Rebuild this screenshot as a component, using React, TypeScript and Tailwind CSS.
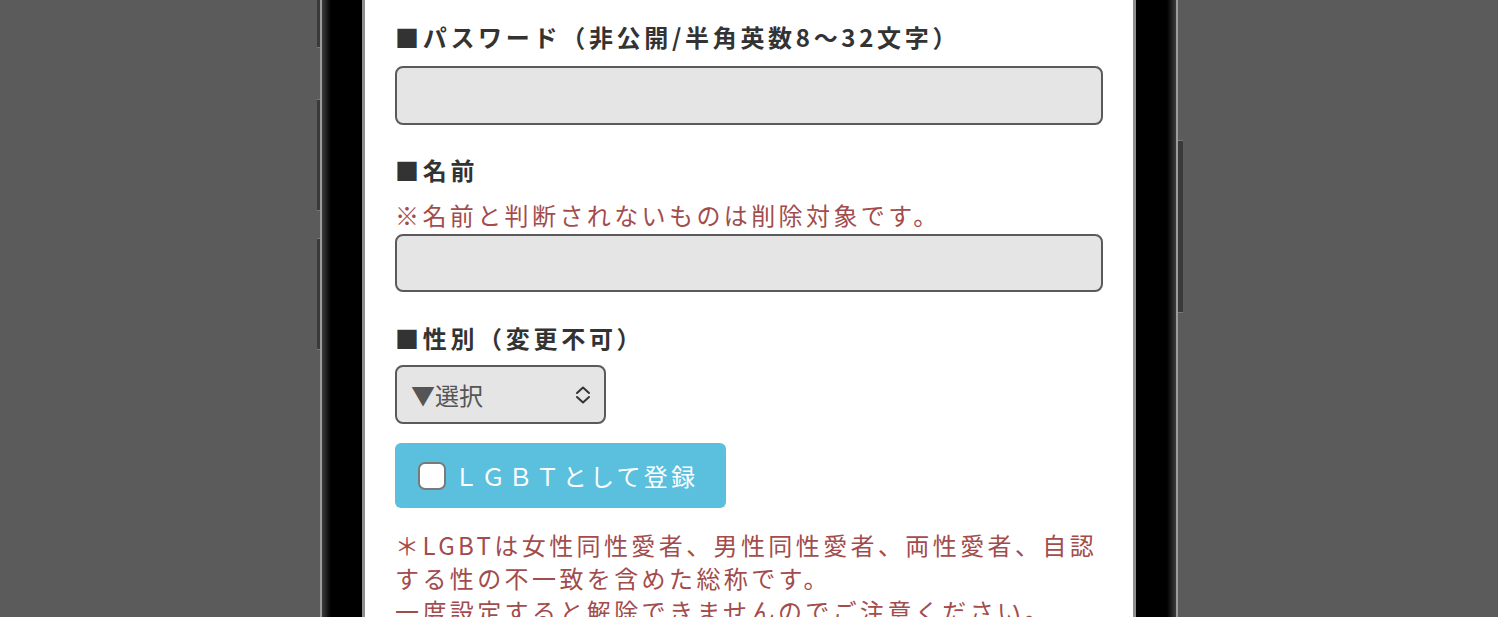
export default function App() {
  const font = { fontFamily: '"Noto Sans CJK JP", "Noto Sans", sans-serif' };

  return (
    <div className="w-full h-[617px] bg-[#5b5b5b] overflow-hidden flex justify-center" style={font}>
      <div className="relative w-[858px] h-[617px] shrink-0 border-x-2 border-[#9c9c9c] bg-[linear-gradient(to_right,#3c3c3c,#000_9px,#000_calc(100%-9px),#3c3c3c)] px-[40px]">
        {/* side buttons */}
        <div className="absolute left-[-5px] top-[-2px] w-[3px] h-[50px] bg-[#3a3a3a] border-b border-[#777]" />
        <div className="absolute left-[-5px] top-[99px] w-[3px] h-[112px] bg-[#3a3a3a] border-y border-[#777]" />
        <div className="absolute left-[-5px] top-[238px] w-[3px] h-[112px] bg-[#3a3a3a] border-y border-[#777]" />
        <div className="absolute right-[-7px] top-[140px] w-[5px] h-[173px] bg-[#3a3a3a] border-y border-[#777]" />

        <div className="h-full bg-white border-x-[3px] border-[#8e8e8e] px-[30px] pt-[19px]">
          <h2 className="text-[24px] leading-[36px] font-bold text-[#333] tracking-[3.7px] whitespace-nowrap">
            ■パスワード（非公開/半角英数8〜32文字）
          </h2>
          <input
            type="password"
            className="mt-[11px] block w-full h-[59px] rounded-[8px] border-2 border-[#5a5a5a] bg-[#e5e5e5] outline-none"
          />

          <h2 className="mt-[27px] text-[24px] leading-[36px] font-bold text-[#333] tracking-[3.7px]">■名前</h2>
          <p className="mt-[9px] text-[24px] leading-[36px] text-[#a24c4c] tracking-[3.4px] whitespace-nowrap">
            ※名前と判断されないものは削除対象です。
          </p>
          <input
            type="text"
            className="mt-[1px] block w-full h-[58px] rounded-[8px] border-2 border-[#5a5a5a] bg-[#e5e5e5] outline-none"
          />

          <h2 className="mt-[28px] text-[24px] leading-[36px] font-bold text-[#333] tracking-[3.7px]">■性別（変更不可）</h2>
          <div className="mt-[9px] w-[211px] h-[59px] rounded-[8px] border-2 border-[#5a5a5a] bg-[#e5e5e5] flex items-center justify-between pl-[14px] pr-[13px]">
            <span className="text-[24px] text-[#555]">▼選択</span>
            <svg width="16" height="20" viewBox="0 0 16 20" fill="none" stroke="#333" strokeWidth="2" strokeLinecap="round" strokeLinejoin="round">
              <path d="M2 8 L8 2.5 L14 8" />
              <path d="M2 12 L8 17.5 L14 12" />
            </svg>
          </div>

          <label className="mt-[19px] w-[331px] h-[65px] rounded-[6px] bg-[#5bc0de] flex items-center pl-[23px]">
            <span className="w-[28px] h-[28px] rounded-[7px] border-2 border-[#7a7a7a] bg-white shrink-0" />
            <span className="ml-[8px] text-[24px] text-white tracking-[3.2px] whitespace-nowrap">ＬＧＢＴとして登録</span>
          </label>

          <div className="mt-[20px] text-[24px] leading-[33px] text-[#a24c4c] tracking-[3.4px] whitespace-nowrap">
            <p>＊LGBTは女性同性愛者、男性同性愛者、両性愛者、自認</p>
            <p>する性の不一致を含めた総称です。</p>
            <p>一度設定すると解除できませんのでご注意ください。</p>
          </div>
        </div>
      </div>
    </div>
  );
}
